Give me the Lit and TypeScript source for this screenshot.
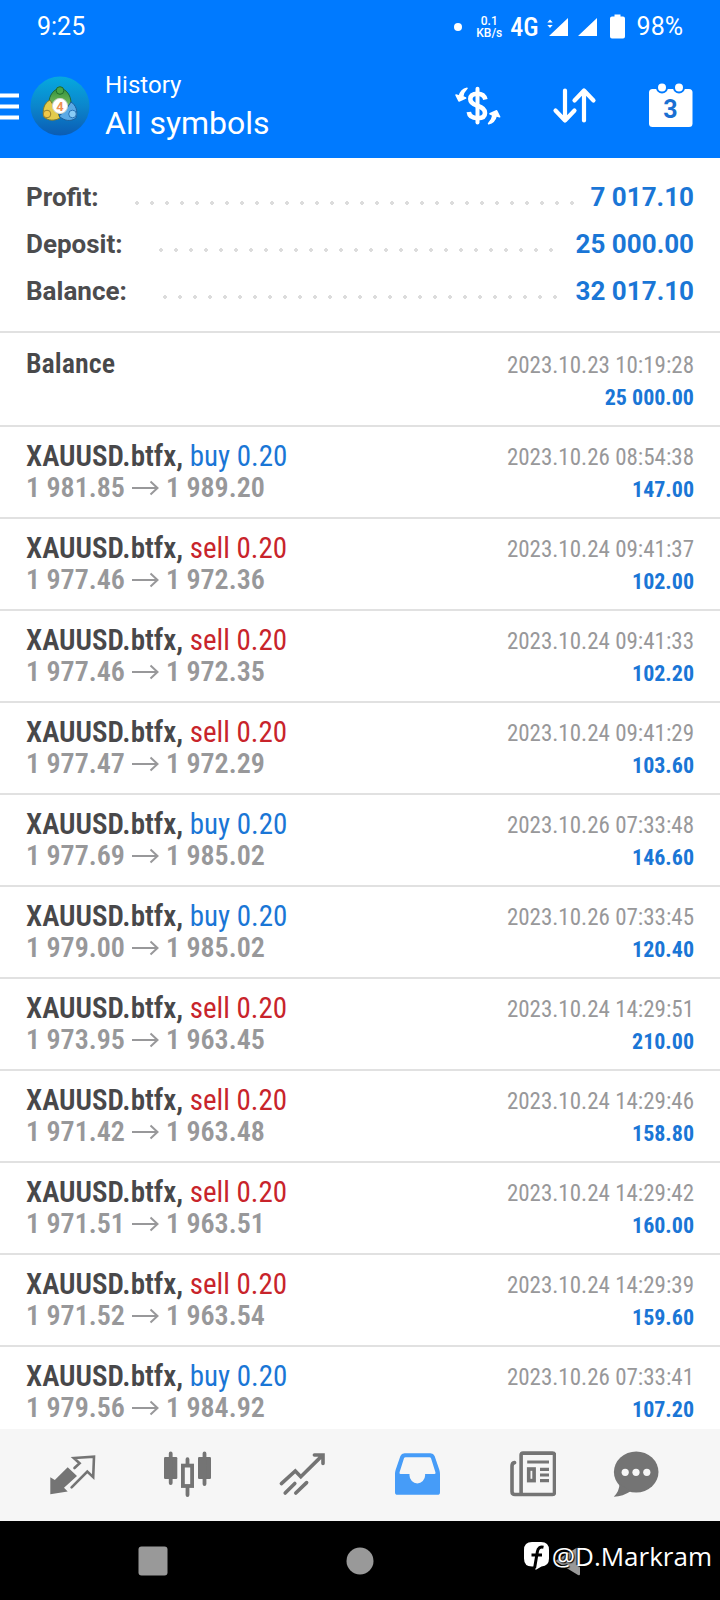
import { LitElement, html, svg, css } from "lit";
import { customElement, property, state } from "lit/decorators.js";
import { classMap } from "lit/directives/class-map.js";

type Side = "buy" | "sell";

interface Deal {
  side?: Side;
  open?: string;
  close?: string;
  time: string;
  amount: string;
}

const SUMMARY: [string, string][] = [
  ["Profit:", "7 017.10"],
  ["Deposit:", "25 000.00"],
  ["Balance:", "32 017.10"],
];

const DEALS: Deal[] = [
  { time: "2023.10.23 10:19:28", amount: "25 000.00" },
  { side: "buy", open: "1 981.85", close: "1 989.20", time: "2023.10.26 08:54:38", amount: "147.00" },
  { side: "sell", open: "1 977.46", close: "1 972.36", time: "2023.10.24 09:41:37", amount: "102.00" },
  { side: "sell", open: "1 977.46", close: "1 972.35", time: "2023.10.24 09:41:33", amount: "102.20" },
  { side: "sell", open: "1 977.47", close: "1 972.29", time: "2023.10.24 09:41:29", amount: "103.60" },
  { side: "buy", open: "1 977.69", close: "1 985.02", time: "2023.10.26 07:33:48", amount: "146.60" },
  { side: "buy", open: "1 979.00", close: "1 985.02", time: "2023.10.26 07:33:45", amount: "120.40" },
  { side: "sell", open: "1 973.95", close: "1 963.45", time: "2023.10.24 14:29:51", amount: "210.00" },
  { side: "sell", open: "1 971.42", close: "1 963.48", time: "2023.10.24 14:29:46", amount: "158.80" },
  { side: "sell", open: "1 971.51", close: "1 963.51", time: "2023.10.24 14:29:42", amount: "160.00" },
  { side: "sell", open: "1 971.52", close: "1 963.54", time: "2023.10.24 14:29:39", amount: "159.60" },
  { side: "buy", open: "1 979.56", close: "1 984.92", time: "2023.10.26 07:33:41", amount: "107.20" },
];

const TABS = [
  {
    id: "quotes",
    label: "Quotes",
    icon: svg`
      <path fill="currentColor" d="M2.3 44.3V27.3L6.8 30 19.7 17.3 29 26 16 37.7 19.7 41.6Z"/>
      <path fill="none" stroke="currentColor" stroke-width="2.6" stroke-linecap="round" stroke-linejoin="miter"
        d="M26.5 18 31.6 13.3 25.8 8 46 6.6 45.2 27.2 39.3 21.6 23.6 37.4"/>`,
  },
  {
    id: "chart",
    label: "Chart",
    icon: svg`
      <g fill="currentColor"><rect x="1" y="7" width="13.3" height="22" rx="1.2"/><rect x="35" y="7" width="13" height="22" rx="1.2"/></g>
      <g fill="none" stroke="currentColor" stroke-width="3.8" stroke-linecap="round">
        <path d="M7.7 3.4V33M41.5 3.4V34M24.5 9.2V14M24.5 38V45"/>
        <rect x="19.9" y="15.6" width="9.2" height="20.4"/>
      </g>`,
  },
  {
    id: "trade",
    label: "Trade",
    icon: svg`<path fill="none" stroke="currentColor" stroke-width="3.6" stroke-linecap="round"
      d="M3.4 33.6 17.3 21 22.8 26.8 44.4 5.4M36.4 5H45V13.4M7.2 43 16.8 33.4M17.8 43 28.6 32.6"/>`,
  },
  {
    id: "history",
    label: "History",
    icon: svg`<path fill="currentColor" fill-rule="evenodd"
      d="M11.5 3.3H37.5Q40.5 3.3 41.6 6L46.4 20Q47 22 47 24V42.2Q47 44.8 44.4 44.8H4.6Q2 44.8 2 42.2V24Q2 22 2.6 20L7.4 6Q8.5 3.3 11.5 3.3ZM12.6 7.3Q11.3 7.3 10.9 8.6L6.5 22.5Q6.3 24 7.6 24H16.5V25.6A7.8 7.8 0 0 0 32.1 25.6V24H41.4Q42.7 24 42.5 22.5L38.1 8.6Q37.7 7.3 36.4 7.3Z"/>`,
  },
  {
    id: "news",
    label: "News",
    icon: svg`
      <g fill="none" stroke="currentColor" stroke-width="3.6" stroke-linecap="round">
        <rect x="13.1" y="3.1" width="33.4" height="41.4" rx="2"/>
        <path d="M6.6 12.6Q4 13 4 16V41.5Q4 44.5 7 44.5H14"/>
        <path stroke-width="3.2" stroke-linecap="butt" d="M19.2 12H41M32 19.3H41M32 25H41M32 30.7H41"/>
        <rect x="20.7" y="19" width="5.4" height="11.6"/>
      </g>`,
  },
  {
    id: "messages",
    label: "Messages",
    icon: svg`
      <ellipse cx="24.2" cy="22" rx="22.3" ry="20.5" fill="currentColor"/>
      <path fill="currentColor" d="M7.5 34Q7.5 41 1.8 46.7 11 46.5 19 41Z"/>
      <g fill="#f6f6f6"><circle cx="13.2" cy="22.3" r="3.6"/><circle cx="24" cy="22.3" r="3.6"/><circle cx="34.8" cy="22.3" r="3.6"/></g>`,
  },
];

@customElement("status-bar")
class StatusBar extends LitElement {
  static styles = css`
    :host {
      display: flex;
      align-items: center;
      justify-content: space-between;
      height: 54px;
      padding: 0 37px;
      box-sizing: border-box;
      font-size: 25px;
      line-height: 28px;
    }
    .tray {
      display: flex;
      align-items: center;
      gap: 8px;
    }
    .dot {
      width: 8px;
      height: 8px;
      margin-right: 6px;
      border-radius: 50%;
      background: #fff;
    }
    .speed {
      display: flex;
      flex-direction: column;
      align-items: center;
      font-size: 12px;
      line-height: 12px;
      font-weight: 500;
    }
    .net {
      font-family: "Roboto Condensed", "Liberation Sans Narrow", Roboto, sans-serif;
      font-size: 26px;
      font-weight: 500;
    }
    .signals {
      display: block;
      margin-right: 4px;
    }
  `;

  render() {
    return html`
      <span>9:25</span>
      <div class="tray">
        <span class="dot"></span>
        <span class="speed"><span>0.1</span><span>KB/s</span></span>
        <span class="net">4G</span>
        <svg class="signals" width="78" height="28" viewBox="0 0 78 28" fill="#fff" aria-hidden="true">
          <path d="M0.3 9.6 3 6.5 5.7 9.6ZM0.3 12 3 15 5.7 12ZM2 23 21 5V23ZM31 23 50 5V23Z" />
          <path d="M67.5 1.5H73.5V3.5H76Q78 3.5 78 5.5V23.5Q78 25.5 76 25.5H65Q63 25.5 63 23.5V5.5Q63 3.5 65 3.5H67.5Z" />
        </svg>
        <span>98%</span>
      </div>
    `;
  }
}

@customElement("app-header")
class AppHeader extends LitElement {
  static styles = css`
    :host {
      display: flex;
      align-items: center;
      height: 104px;
      padding-right: 26px;
      box-sizing: border-box;
    }
    button {
      display: block;
      padding: 0;
      border: 0;
      background: none;
      color: inherit;
      cursor: pointer;
    }
    svg {
      display: block;
    }
    .logo {
      margin-left: 11px;
    }
    .titles {
      flex: 1;
      margin-left: 15px;
      padding-bottom: 2px;
    }
    .section {
      margin: 0;
      font-size: 24px;
      line-height: 36px;
      font-weight: 400;
    }
    .symbols {
      margin: 0;
      font-size: 32px;
      line-height: 40px;
      font-weight: 400;
    }
    .actions {
      display: flex;
      gap: 48px;
    }
    .day {
      font: 700 25px Roboto, sans-serif;
      fill: #1a70d2;
    }
    .version {
      font: 700 13px Roboto, sans-serif;
      fill: #ee9052;
    }
  `;

  render() {
    return html`
      <button aria-label="Menu">
        <svg width="19" height="48" viewBox="0 0 19 48" stroke="#fff" stroke-width="4">
          <path d="M0 13.5H19M0 24.5H19M0 35.5H19" />
        </svg>
      </button>
      <svg class="logo" width="60" height="60" viewBox="0 0 60 60" aria-hidden="true">
        <defs>
          <linearGradient id="sky" x1="0" y1="0" x2="0" y2="1">
            <stop offset="0" stop-color="#06a9df" />
            <stop offset="0.5" stop-color="#0b86cc" />
            <stop offset="1" stop-color="#0b5cb4" />
          </linearGradient>
          <linearGradient id="green" x1="0" y1="0" x2="0" y2="1">
            <stop offset="0" stop-color="#2f8f3a" />
            <stop offset="1" stop-color="#8cc866" />
          </linearGradient>
        </defs>
        <circle cx="30" cy="30" r="29.5" fill="url(#sky)" />
        <path d="M30 12C36 13 41 19 41 27L37 34 23 34 19 27C19 19 24 13 30 12Z" fill="url(#green)" stroke="#1d6b3a" />
        <path d="M20 24C14 27 12 34 14 41 18 45 25 45 30 42L27 35Z" fill="#e2cb4c" stroke="#7d7a2c" />
        <path d="M41 26C46 29 48 35 46 42 41 46 34 45 29 40L35 35Z" fill="#5aaae6" stroke="#1c5f9c" />
        <circle cx="30" cy="14.5" r="3.8" fill="#4aa648" stroke="#1f6b2c" />
        <circle cx="17" cy="38" r="3.8" fill="#f0c848" stroke="#97802f" />
        <circle cx="42.5" cy="38" r="3.8" fill="#8accf6" stroke="#2a72b4" />
        <circle cx="30" cy="30" r="7.6" fill="#fff" stroke="#cfd6cf" />
        <text class="version" x="30" y="34.5" text-anchor="middle">4</text>
      </svg>
      <div class="titles">
        <h1 class="section">History</h1>
        <p class="symbols">All symbols</p>
      </div>
      <div class="actions">
        <button aria-label="Filter by currency">
          <svg width="48" height="48" viewBox="0 0 48 48" fill="none" stroke="#fff">
            <path stroke-width="4" stroke-linecap="round" d="M23.5 6.8V40.4" />
            <path
              stroke-width="4.6"
              stroke-linecap="butt"
              d="M31.4 17.5Q30 11.8 23.5 11.8 16.3 12 16.3 17 16.3 21.5 23.5 23.8 31 26.2 31 31 31 36.2 23.5 36.2 15.5 36 14.8 30"
            />
            <path
              fill="#fff"
              stroke-width="1.6"
              stroke-linejoin="round"
              d="M13 6.2Q7 7.4 5.4 14L2 13 5 19 11.6 16 8.6 14.6Q9.2 10 13 6.2ZM34.6 41.6Q40.6 40.4 42.2 33.8L45.6 34.8 42.6 28.8 36 31.8 39 33.2Q38.4 37.8 34.6 41.6Z"
            />
          </svg>
        </button>
        <button aria-label="Sort">
          <svg width="48" height="48" viewBox="0 0 48 48" fill="none" stroke="#fff" stroke-width="4.2" stroke-linecap="round" stroke-linejoin="round">
            <path d="M15 8.5V38.5M5.5 28.5 15 38.5 24.5 28.5M34 38.5V8.5M24.5 18.5 34 8.5 43.5 18.5" />
          </svg>
        </button>
        <button aria-label="Period">
          <svg width="48" height="48" viewBox="0 0 48 48">
            <rect x="3" y="7" width="43.5" height="38" rx="3.5" fill="#fff" />
            <g fill="#fff" stroke="#007aff" stroke-width="2">
              <circle cx="16" cy="5.5" r="5" />
              <circle cx="33" cy="5.5" r="5" />
            </g>
            <text class="day" x="24.5" y="36" text-anchor="middle">3</text>
          </svg>
        </button>
      </div>
    `;
  }
}

@customElement("account-summary")
class AccountSummary extends LitElement {
  static styles = css`
    :host {
      display: block;
      padding: 15px 26px 17px;
      border-bottom: 2px solid #e1e1e1;
    }
    .rows {
      margin: 0;
    }
    .row {
      display: flex;
      align-items: center;
      height: 47px;
      font-size: 26px;
      line-height: 30px;
      font-weight: 700;
    }
    .label {
      color: #4c4c4e;
    }
    .leader {
      flex: 1;
      height: 4px;
      margin: 12px 12px 0 36px;
      background: radial-gradient(circle at 2px 2px, #dcdcdc 2px, transparent 2px) 0 0 / 15px 4px repeat-x;
    }
    .value {
      margin: 0;
      color: #1a76d6;
    }
  `;

  render() {
    return html`
      <dl class="rows">
        ${SUMMARY.map(
          ([label, value]) => html`
            <div class="row">
              <dt class="label">${label}</dt>
              <span class="leader"></span>
              <dd class="value">${value}</dd>
            </div>
          `
        )}
      </dl>
    `;
  }
}

@customElement("deal-row")
class DealRow extends LitElement {
  static styles = css`
    :host {
      display: flex;
      justify-content: space-between;
      height: 92px;
      padding: 13px 26px 0;
      box-sizing: border-box;
      border-bottom: 2px solid #e1e1e1;
      font-family: "Roboto Condensed", "Liberation Sans Narrow", Roboto, sans-serif;
      font-size: 28px;
      line-height: 32px;
      white-space: nowrap;
    }
    .title {
      color: #48484a;
      font-weight: 600;
    }
    .symbol {
      font-size: 29px;
    }
    .side {
      font-weight: 400;
    }
    .buy {
      color: #1a76d6;
    }
    .sell {
      color: #c8242b;
    }
    .prices {
      display: flex;
      align-items: center;
      gap: 7px;
      color: #98989a;
      font-weight: 600;
    }
    .meta {
      padding-top: 2px;
      text-align: right;
    }
    .time {
      color: #98989a;
      font-size: 23px;
    }
    .amount {
      color: #1a76d6;
      font-size: 22px;
      font-weight: 700;
    }
  `;

  @property({ attribute: false }) deal!: Deal;

  render() {
    const { side, open, close, time, amount } = this.deal;
    return html`
      <div>
        ${side
          ? html`
              <div class="title symbol">
                XAUUSD.btfx, <span class=${classMap({ side: true, [side]: true })}>${side} 0.20</span>
              </div>
              <div class="prices">
                <span>${open}</span>
                <svg width="27" height="16" viewBox="0 0 27 16" fill="none" stroke="currentColor" stroke-width="2" aria-label="to">
                  <path d="M0 8H25.5M18.5 1.5 25.5 8 18.5 14.5" />
                </svg>
                <span>${close}</span>
              </div>
            `
          : html`<div class="title">Balance</div>`}
      </div>
      <div class="meta">
        <div class="time">${time}</div>
        <div class="amount">${amount}</div>
      </div>
    `;
  }
}

@customElement("tab-bar")
class TabBar extends LitElement {
  static styles = css`
    :host {
      display: grid;
      grid-template-columns: repeat(5, 115fr) 94fr;
      height: 92px;
      padding: 0 37px 2px 14px;
      box-sizing: border-box;
      background: #f6f6f6;
    }
    .tab {
      display: grid;
      place-items: center;
      padding: 0;
      border: 0;
      background: none;
      color: #747474;
      cursor: pointer;
    }
    .active {
      color: #469cf8;
    }
  `;

  @state() private current = "history";

  render() {
    return TABS.map(
      (tab) => html`
        <button
          class=${classMap({ tab: true, active: tab.id === this.current })}
          aria-label=${tab.label}
          @click=${() => (this.current = tab.id)}
        >
          <svg width="48" height="48" viewBox="0 0 48 48">${tab.icon}</svg>
        </button>
      `
    );
  }
}

@customElement("system-nav")
class SystemNav extends LitElement {
  static styles = css`
    :host {
      position: relative;
      display: grid;
      grid-template-columns: repeat(3, 1fr);
      height: 79px;
      padding: 0 50px;
      box-sizing: border-box;
      background: #000;
    }
    .key {
      display: grid;
      place-items: center;
      padding: 0;
      border: 0;
      background: none;
      cursor: pointer;
    }
    .credit {
      position: absolute;
      right: 8px;
      top: 16px;
      display: flex;
      align-items: center;
      gap: 3px;
      color: #fff;
      font: 400 26px/38px "Open Sans", "Noto Sans", sans-serif;
      text-shadow: 1px 1px 1px #000, -1px -1px 1px #000;
    }
    .mark {
      font: italic 700 22px/28px "Open Sans", sans-serif;
      text-shadow: none;
    }
  `;

  render() {
    return html`
      <button class="key" aria-label="Recent apps">
        <svg width="30" height="30" viewBox="0 0 30 30"><rect x="0.5" y="0.5" width="29" height="29" rx="3" fill="#999" /></svg>
      </button>
      <button class="key" aria-label="Home">
        <svg width="30" height="30" viewBox="0 0 30 30"><circle cx="15" cy="15" r="13.5" fill="#999" /></svg>
      </button>
      <button class="key" aria-label="Back">
        <svg width="30" height="30" viewBox="0 0 30 30"><path d="M3 15 26 1Q28 0 28 2V28Q28 30 26 29Z" fill="#999" /></svg>
      </button>
      <div class="credit">
        <svg width="25" height="28" viewBox="0 0 25 28" overflow="visible" aria-hidden="true">
          <path d="M8 0H17Q25 0 25 8V16.5Q25 24 17.5 24.5L11.5 28V24.5H8Q0 24.5 0 16.5V8Q0 0 8 0Z" fill="#fff" />
          <path d="M19.5 5.2Q14.4 4 13.4 9.500L10.600 26M7.500 13H18" fill="none" stroke="#000" stroke-width="3" />
        </svg>
        <span>@D.Markram</span>
      </div>
    `;
  }
}

@customElement("app-root")
class AppRoot extends LitElement {
  static styles = css`
    :host {
      display: flex;
      flex-direction: column;
      height: 100vh;
      background: #fff;
      font-family: Roboto, sans-serif;
    }
    .top {
      background: #007aff;
      color: #fff;
    }
    .deals {
      flex: 1;
      min-height: 0;
      margin: 0;
      padding: 2px 0 0;
      list-style: none;
      overflow-y: auto;
      scrollbar-width: none;
    }
  `;

  render() {
    return html`
      <header class="top">
        <status-bar></status-bar>
        <app-header></app-header>
      </header>
      <account-summary></account-summary>
      <ul class="deals">
        ${DEALS.map((deal) => html`<li><deal-row .deal=${deal}></deal-row></li>`)}
      </ul>
      <tab-bar></tab-bar>
      <system-nav></system-nav>
    `;
  }
}
